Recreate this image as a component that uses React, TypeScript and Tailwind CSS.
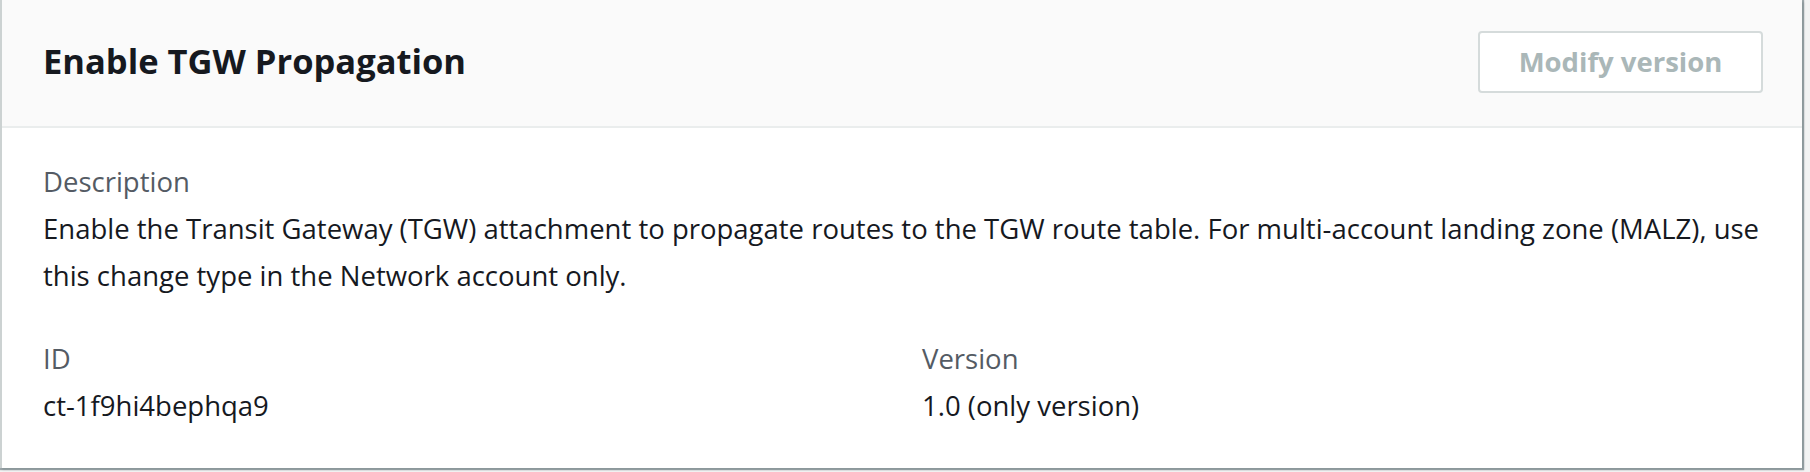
import React from 'react';

const font = { fontFamily: '"Open Sans", "Noto Sans", Arial, sans-serif' };

function Field({ label, value, className }: { label: string; value: string; className?: string }) {
  return (
    <div className={`flex flex-col ${className ?? ''}`}>
      <span className="text-[27.5px] leading-[47px] text-[#545b64]">{label}</span>
      <span className="text-[27.5px] leading-[47px] text-[#16191f]">{value}</span>
    </div>
  );
}

export default function App() {
  return (
    <div className="w-[1810px] h-[472px] bg-[#f2f3f3]" style={font}>
      <div className="w-[1802px] h-[468px] bg-white border-l-2 border-[#ccd2d2] shadow-[1px_1px_1px_1px_rgba(0,28,36,0.35),2px_2px_2px_0_rgba(0,28,36,0.12)] flex flex-col">
        <div className="h-[128px] bg-[#fafafa] border-b-2 border-[#eaeded] flex items-center justify-between pl-[41px] pr-[39px]">
          <h2 className="text-[34.5px] font-bold text-[#16191f] pb-[4px]">Enable TGW Propagation</h2>
          <button
            disabled
            className="w-[285px] h-[62px] mt-[-3px] bg-white border-2 border-[#d5dbdb] rounded-[4px] text-[27.5px] font-bold text-[#aab7b8]"
          >
            Modify version
          </button>
        </div>

        <div className="pl-[41px] pr-[40px] pt-[30px]">
          <div className="flex flex-col">
            <span className="text-[27.5px] leading-[47px] text-[#545b64]">Description</span>
            <p className="text-[27.5px] leading-[47px] text-[#16191f]">
              Enable the Transit Gateway (TGW) attachment to propagate routes to the TGW route table. For multi-account landing zone (MALZ), use this change type in the Network account only.
            </p>
          </div>

          <div className="flex mt-[36px]">
            <Field label="ID" value="ct-1f9hi4bephqa9" className="w-[879px]" />
            <Field label="Version" value="1.0 (only version)" />
          </div>
        </div>
      </div>
    </div>
  );
}
